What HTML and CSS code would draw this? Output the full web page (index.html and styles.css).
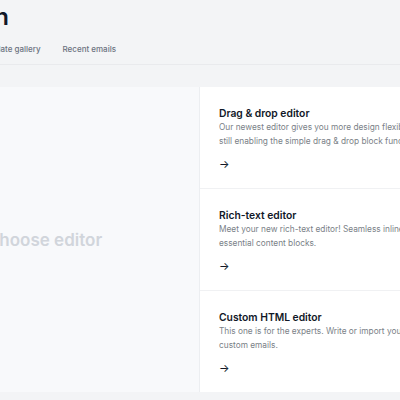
FILE: index.html
```html
<!DOCTYPE html>
<html lang="en">
<head>
  <meta charset="UTF-8">
  <title>Email design</title>
  <link rel="stylesheet" href="styles.css">
</head>
<body>
  <div class="page">
    <header class="top">
      <h1 class="top-title">Email design</h1>
      <nav class="tabs">
        <a class="tab tab-active">Editor</a>
        <a class="tab">Template gallery</a>
        <a class="tab">Recent emails</a>
      </nav>
    </header>
    <main class="chooser">
      <div class="chooser-empty">Choose editor</div>
      <div class="editors">
        <div class="editor-card">
          <h3 class="editor-name">Drag &amp; drop editor</h3>
          <p class="editor-desc">Our newest editor gives you more design flexibility while<br>still enabling the simple drag &amp; drop block functionality.</p>
          <span class="editor-go">&rarr;</span>
        </div>
        <div class="editor-card">
          <h3 class="editor-name">Rich-text editor</h3>
          <p class="editor-desc">Meet your new rich-text editor! Seamless inline editing of all<br>essential content blocks.</p>
          <span class="editor-go">&rarr;</span>
        </div>
        <div class="editor-card">
          <h3 class="editor-name">Custom HTML editor</h3>
          <p class="editor-desc">This one is for the experts. Write or import your own HTML for<br>custom emails.</p>
          <span class="editor-go">&rarr;</span>
        </div>
      </div>
    </main>
  </div>
</body>
</html>
```

FILE: styles.css
```css
body{
  margin: 0;
  background: #f3f4f6;
  font-family: Inter, "Liberation Sans", sans-serif;
  color: #111827;
  overflow: hidden;
}
.page{
  width: 640px;
  margin-left: -120px;
}
.top{
  border-bottom: 1px solid #e9eaed;
}
/* right edges pinned, the start of the row runs off to the left */
.top-title{
  display: flex;
  justify-content: flex-end;
  width: 129px;
  margin: 0;
  padding-top: 1px;
  font-size: 24px;
  font-weight: 600;
  line-height: 32px;
  white-space: nowrap;
}
.tabs{
  display: flex;
  justify-content: flex-end;
  gap: 22px;
  width: 236px;
  padding-top: 7px;
  white-space: nowrap;
}
.tab{
  padding: 4px 0 10px;
  font-size: 8px;
  font-weight: 500;
  line-height: 10px;
  color: #6b7280;
}
.tab-active{
  color: #111827;
}
.chooser{
  display: grid;
  grid-template-columns: 320px 1fr;
  margin-top: 22px;
  background: #fff;
}
.chooser-empty{
  display: flex;
  align-items: center;
  justify-content: center;
  padding-left: 10px;
  background: #f8f9fb;
  border-right: 1px solid #eceef1;
  color: #d1d5db;
  font-size: 17px;
  font-weight: 600;
}
.editor-card{
  height: 82px;
  padding: 19px 18px 0 19px;
  border-bottom: 1px solid #f0f1f3;
}
.editor-card:last-child{
  border-bottom: none;
}
.editor-name{
  margin: 0;
  font-size: 10.3px;
  font-weight: 600;
  line-height: 14px;
}
.editor-desc{
  margin: 0;
  font-size: 8.3px;
  line-height: 14px;
  color: #7a7f87;
  white-space: nowrap;
}
.editor-go{
  display: block;
  margin-top: 9px;
  font-size: 11px;
  line-height: 14px;
}
```
